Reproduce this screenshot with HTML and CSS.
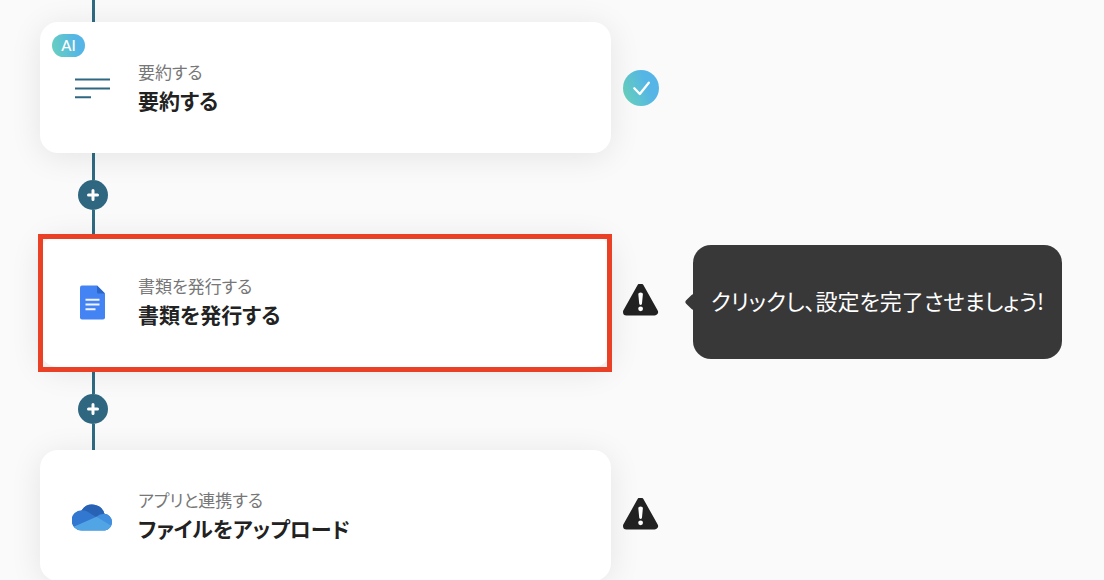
FILE: index.html
```html
<!DOCTYPE html>
<html lang="ja">
<head>
  <meta charset="utf-8">
  <meta name="viewport" content="width=device-width">
  <title>ワークフロー</title>
  <link rel="stylesheet" href="styles.css">
</head>
<body>
  <main class="flow">
    <div class="connector connector-first">
      <span class="line"></span>
    </div>

    <div class="step">
      <button type="button" class="card">
        <span class="badge">AI</span>
        <svg class="icon" viewBox="0 0 42 42" aria-hidden="true">
          <path d="M3 12.500h35M3 21.500h35M3 30.300h16" stroke="#2f6781" stroke-width="2" fill="none"/>
        </svg>
        <span class="text">
          <span class="kind">要約する</span>
          <span class="name">要約する</span>
        </span>
      </button>
      <svg class="status" viewBox="0 0 36 36" role="img" aria-label="完了">
        <defs>
          <linearGradient id="done" x1="0" y1="0.7" x2="1" y2="0.3">
            <stop offset="0" stop-color="#68d1bd"/>
            <stop offset="0.7" stop-color="#54b5e6"/>
          </linearGradient>
        </defs>
        <circle cx="18" cy="18" r="18" fill="url(#done)"/>
        <path d="M11.300 18.300l5.500 5.700 9-11.300" stroke="#fff" stroke-width="2.300" stroke-linecap="round" stroke-linejoin="round" fill="none"/>
      </svg>
    </div>

    <div class="connector">
      <span class="line"></span>
      <button type="button" class="add" aria-label="追加">
        <svg viewBox="0 0 12 12" aria-hidden="true"><path d="M6 1.500v9M1.500 6h9"/></svg>
      </button>
      <span class="line"></span>
    </div>

    <div class="step">
      <button type="button" class="card selected">
        <svg class="icon" viewBox="0 0 42 42" aria-hidden="true">
          <path d="M10 4.500h15l8 8v24a2 2 0 0 1-2 2H10a2 2 0 0 1-2-2v-30a2 2 0 0 1 2-2z" fill="#4483f3"/>
          <path d="M25 4.500l8 8h-6.500a1.500 1.500 0 0 1-1.500-1.500z" fill="#2c65c9"/>
          <path d="M13.500 18.800h14M13.500 23.500h14M13.500 28.200h10" stroke="#f1f5fe" stroke-width="2" fill="none"/>
        </svg>
        <span class="text">
          <span class="kind">書類を発行する</span>
          <span class="name">書類を発行する</span>
        </span>
      </button>
      <svg class="status" viewBox="0 0 36 36" role="img" aria-label="未設定">
        <path d="M17.500 3L31.500 28H3.500z" fill="#222" stroke="#222" stroke-width="7" stroke-linejoin="round"/>
        <path d="M15.300 10a2.300 1.500 0 0 1 4.600 0l-.9 9.500a1.400 1.400 0 0 1-2.800 0z" fill="#fff"/>
        <circle cx="17.600" cy="24.800" r="2.400" fill="#fff"/>
      </svg>
      <div class="tooltip">クリックし、設定を完了させましょう!</div>
    </div>

    <div class="connector">
      <span class="line"></span>
      <button type="button" class="add" aria-label="追加">
        <svg viewBox="0 0 12 12" aria-hidden="true"><path d="M6 1.500v9M1.500 6h9"/></svg>
      </button>
      <span class="line"></span>
    </div>

    <div class="step">
      <button type="button" class="card">
        <svg class="icon" viewBox="0 0 42 42" aria-hidden="true">
          <defs>
            <clipPath id="cloud">
              <path d="M9.500 35.500A9.500 9.500 0 0 1 9.800 15.200 12.600 12.600 0 0 1 32.400 18.700 8.500 8.500 0 0 1 33 35.500z"/>
            </clipPath>
          </defs>
          <g clip-path="url(#cloud)">
            <path d="M0 8h42v28H0z" fill="#3277d0"/>
            <path d="M9 15.500q4-.8 7 1.500l8.500 5.200L42 17V6H9z" fill="#2862b4"/>
            <path d="M24 22q4-3.300 8.400-3.300H42V34z" fill="#418fdf"/>
            <path d="M0 32.500L24.500 21.800 42 32.500V37H0z" fill="#52a5e5"/>
          </g>
        </svg>
        <span class="text">
          <span class="kind">アプリと連携する</span>
          <span class="name">ファイルをアップロード</span>
        </span>
      </button>
      <svg class="status" viewBox="0 0 36 36" role="img" aria-label="未設定">
        <path d="M17.500 3L31.500 28H3.500z" fill="#222" stroke="#222" stroke-width="7" stroke-linejoin="round"/>
        <path d="M15.300 10a2.300 1.500 0 0 1 4.600 0l-.9 9.500a1.400 1.400 0 0 1-2.800 0z" fill="#fff"/>
        <circle cx="17.600" cy="24.800" r="2.400" fill="#fff"/>
      </svg>
    </div>
  </main>
</body>
</html>
```
FILE: styles.css
```css
html, body {
  height: 100%;
  margin: 0;
}
body {
  background: #fafafa;
  color: #222;
  font-family: "Noto Sans CJK JP", sans-serif;
  font-feature-settings: "palt";
  overflow: hidden;
}
button {
  border: 0;
  padding: 0;
  font: inherit;
  font-feature-settings: inherit;
  color: inherit;
  cursor: pointer;
}
.flow {
  padding: 0 40px;
}
.step {
  display: flex;
  align-items: center;
}

/* vertical line between the cards */
.connector {
  display: flex;
  flex-direction: column;
  align-items: center;
  width: 30px;
  height: 83px;
  margin-left: 38px;
}
.connector-first {
  height: 22px;
}
.line {
  flex: 1;
  width: 3px;
  background: #2f6b82;
}
.add {
  display: flex;
  align-items: center;
  justify-content: center;
  width: 30px;
  height: 30px;
  border-radius: 50%;
  background: #2f6781;
}
.add svg {
  width: 12px;
  height: 12px;
  fill: none;
  stroke: #fff;
  stroke-width: 3;
  stroke-linecap: round;
}

.card {
  position: relative;
  flex: 0 1 571px;
  display: flex;
  align-items: center;
  gap: 24px;
  height: 131px;
  padding: 0 32px;
  border-radius: 18px;
  background: #fff;
  box-shadow: 0 4px 32px rgba(0, 0, 0, .09);
  text-align: left;
}
.selected::after {
  content: "";
  position: absolute;
  inset: -2px -1px -5px -2px;
  border: 5px solid #ea4025;
}
.icon {
  flex: none;
  width: 42px;
  height: 42px;
}
.text {
  display: flex;
  flex-direction: column;
  padding-bottom: 4px;
  line-height: 28px;
}
.kind {
  font-size: 17px;
  color: #777;
}
.name {
  font-size: 21px;
  font-weight: 700;
}
.badge {
  position: absolute;
  top: 12px;
  left: 12px;
  width: 33px;
  border-radius: 12px;
  background: linear-gradient(75deg, #68d1bd, #54b5e6 75%);
  color: #fff;
  font-family: Lato, sans-serif;
  font-size: 15px;
  font-weight: 500;
  line-height: 23px;
  text-align: center;
}
.status {
  flex: none;
  width: 36px;
  height: 36px;
  margin-left: 12px;
}

.tooltip {
  position: relative;
  margin-left: 34px;
  padding: 40px 18px 44px;
  border-radius: 18px;
  background: #383838;
  color: #fff;
  font-size: 22px;
  line-height: 30px;
}
.tooltip::before {
  content: "";
  position: absolute;
  top: 50%;
  left: -6px;
  width: 12px;
  height: 12px;
  margin-top: -6px;
  border-radius: 2px;
  background: #383838;
  transform: rotate(45deg);
}
```
